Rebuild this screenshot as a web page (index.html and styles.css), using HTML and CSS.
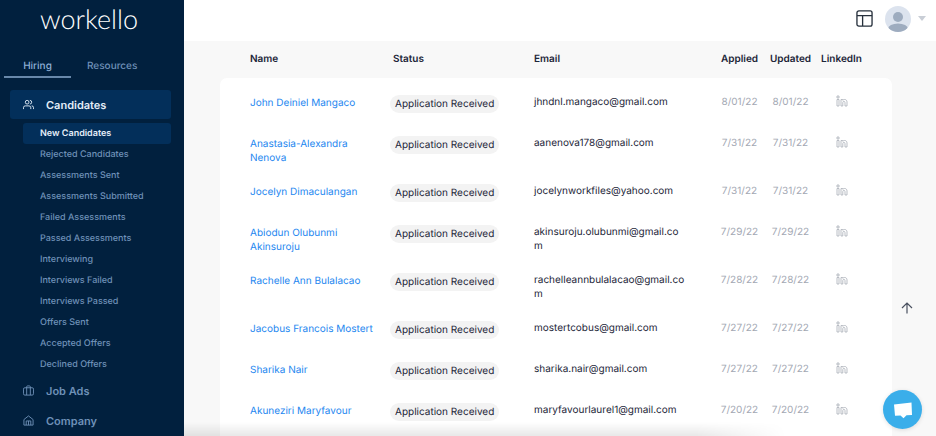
FILE: index.html
```html
<!DOCTYPE html>
<html lang="en">
<head>
    <meta charset="UTF-8">
    <meta name="viewport" content="width=device-width, initial-scale=1.0">
    <title>New Candidates - Workello</title>
    <link rel="stylesheet" href="styles.css">
</head>
<body>
    <svg class="sprite" aria-hidden="true">
        <symbol id="icon-linkedin" viewBox="0 0 12 12">
            <path d="M1 4.5h2v6.5H1zM1 1h2v2H1zM5 11V4.5h1.8v.8C8 3.900 11 4.200 11 7v4H9V7.500c0-1.500-2.200-1.500-2.200 0V11z"/>
        </symbol>
    </svg>

    <div class="layout">
        <aside class="sidebar">
            <a class="logo" href="#">workello</a>

            <div class="tabs">
                <a class="tab active" href="#">Hiring</a>
                <a class="tab" href="#">Resources</a>
            </div>

            <nav class="nav">
                <a class="nav-item active" href="#">
                    <svg class="nav-icon" viewBox="0 0 24 24">
                        <circle cx="9" cy="7" r="4"/>
                        <path d="M1 22v-3a4 4 0 0 1 4-4h8a4 4 0 0 1 4 4v3M15 3a4 4 0 0 1 0 8M19 15a4 4 0 0 1 4 4v3"/>
                    </svg>
                    Candidates
                </a>
                <ul class="sub-nav">
                    <li><a class="active" href="#">New Candidates</a></li>
                    <li><a href="#">Rejected Candidates</a></li>
                    <li><a href="#">Assessments Sent</a></li>
                    <li><a href="#">Assessments Submitted</a></li>
                    <li><a href="#">Failed Assessments</a></li>
                    <li><a href="#">Passed Assessments</a></li>
                    <li><a href="#">Interviewing</a></li>
                    <li><a href="#">Interviews Failed</a></li>
                    <li><a href="#">Interviews Passed</a></li>
                    <li><a href="#">Offers Sent</a></li>
                    <li><a href="#">Accepted Offers</a></li>
                    <li><a href="#">Declined Offers</a></li>
                </ul>
                <a class="nav-item" href="#">
                    <svg class="nav-icon" viewBox="0 0 24 24">
                        <rect x="1" y="6" width="22" height="16" rx="3"/>
                        <path d="M8 22V4a2 2 0 0 1 2-2h4a2 2 0 0 1 2 2v18"/>
                    </svg>
                    Job Ads
                </a>
                <a class="nav-item" href="#">
                    <svg class="nav-icon" viewBox="0 0 24 24">
                        <path d="M2 10L12 2l10 8v12H2zM7 22v-9h10v9M12 13v9"/>
                    </svg>
                    Company
                </a>
            </nav>
        </aside>

        <main class="main">
            <header class="topbar">
                <button class="icon-btn" type="button" aria-label="Layout">
                    <svg class="layout-icon" viewBox="0 0 18 18">
                        <rect x="1" y="1" width="16" height="16" rx="2"/>
                        <path d="M1 6h16M7 6v11"/>
                    </svg>
                </button>
                <button class="icon-btn user-btn" type="button" aria-label="Account">
                    <svg class="avatar" viewBox="0 0 26 26">
                        <clipPath id="avatar-clip"><circle cx="13" cy="13" r="13"/></clipPath>
                        <g clip-path="url(#avatar-clip)">
                            <rect width="26" height="26" fill="#dce3ee"/>
                            <circle cx="13" cy="11" r="5" fill="#9eacbf"/>
                            <ellipse cx="13" cy="23" rx="10" ry="5.500" fill="#9eacbf"/>
                        </g>
                    </svg>
                    <svg class="caret" viewBox="0 0 8 5"><path d="M0 0h8L4 5z"/></svg>
                </button>
            </header>

            <div class="content">
                <table class="candidates">
                    <colgroup>
                        <col class="col-name">
                        <col class="col-status">
                        <col>
                        <col class="col-date">
                        <col class="col-date">
                        <col class="col-linkedin">
                    </colgroup>
                    <thead>
                        <tr>
                            <th class="name">Name</th>
                            <th class="status">Status</th>
                            <th>Email</th>
                            <th class="date">Applied</th>
                            <th class="date">Updated</th>
                            <th class="linkedin">LinkedIn</th>
                        </tr>
                    </thead>
                    <tbody>
                        <tr>
                            <td class="name"><a href="#">John Deiniel Mangaco</a></td>
                            <td><span class="badge">Application Received</span></td>
                            <td class="email">jhndnl.mangaco@gmail.com</td>
                            <td class="date">8/01/22</td>
                            <td class="date">8/01/22</td>
                            <td class="linkedin"><a href="#" aria-label="LinkedIn"><svg><use href="#icon-linkedin"/></svg></a></td>
                        </tr>
                        <tr>
                            <td class="name"><a href="#">Anastasia-Alexandra Nenova</a></td>
                            <td><span class="badge">Application Received</span></td>
                            <td class="email">aanenova178@gmail.com</td>
                            <td class="date">7/31/22</td>
                            <td class="date">7/31/22</td>
                            <td class="linkedin"><a href="#" aria-label="LinkedIn"><svg><use href="#icon-linkedin"/></svg></a></td>
                        </tr>
                        <tr>
                            <td class="name"><a href="#">Jocelyn Dimaculangan</a></td>
                            <td><span class="badge">Application Received</span></td>
                            <td class="email">jocelynworkfiles@yahoo.com</td>
                            <td class="date">7/31/22</td>
                            <td class="date">7/31/22</td>
                            <td class="linkedin"><a href="#" aria-label="LinkedIn"><svg><use href="#icon-linkedin"/></svg></a></td>
                        </tr>
                        <tr>
                            <td class="name"><a href="#">Abiodun Olubunmi Akinsuroju</a></td>
                            <td><span class="badge">Application Received</span></td>
                            <td class="email">akinsuroju.olubunmi@gmail.com</td>
                            <td class="date">7/29/22</td>
                            <td class="date">7/29/22</td>
                            <td class="linkedin"><a href="#" aria-label="LinkedIn"><svg><use href="#icon-linkedin"/></svg></a></td>
                        </tr>
                        <tr>
                            <td class="name"><a href="#">Rachelle Ann Bulalacao</a></td>
                            <td><span class="badge">Application Received</span></td>
                            <td class="email">rachelleannbulalacao@gmail.com</td>
                            <td class="date">7/28/22</td>
                            <td class="date">7/28/22</td>
                            <td class="linkedin"><a href="#" aria-label="LinkedIn"><svg><use href="#icon-linkedin"/></svg></a></td>
                        </tr>
                        <tr>
                            <td class="name"><a href="#">Jacobus Francois Mostert</a></td>
                            <td><span class="badge">Application Received</span></td>
                            <td class="email">mostertcobus@gmail.com</td>
                            <td class="date">7/27/22</td>
                            <td class="date">7/27/22</td>
                            <td class="linkedin"><a href="#" aria-label="LinkedIn"><svg><use href="#icon-linkedin"/></svg></a></td>
                        </tr>
                        <tr>
                            <td class="name"><a href="#">Sharika Nair</a></td>
                            <td><span class="badge">Application Received</span></td>
                            <td class="email">sharika.nair@gmail.com</td>
                            <td class="date">7/27/22</td>
                            <td class="date">7/27/22</td>
                            <td class="linkedin"><a href="#" aria-label="LinkedIn"><svg><use href="#icon-linkedin"/></svg></a></td>
                        </tr>
                        <tr>
                            <td class="name"><a href="#">Akuneziri Maryfavour</a></td>
                            <td><span class="badge">Application Received</span></td>
                            <td class="email">maryfavourlaurel1@gmail.com</td>
                            <td class="date">7/20/22</td>
                            <td class="date">7/20/22</td>
                            <td class="linkedin"><a href="#" aria-label="LinkedIn"><svg><use href="#icon-linkedin"/></svg></a></td>
                        </tr>
                    </tbody>
                </table>
            </div>
        </main>
    </div>

    <div class="bottom-fade"></div>

    <button class="scroll-top" type="button" aria-label="Back to top">
        <svg viewBox="0 0 12 12"><path d="M6 11.500V1M1 6l5-5 5 5"/></svg>
    </button>
    <button class="chat-btn" type="button" aria-label="Open chat">
        <svg viewBox="0 0 20 18"><path d="M1 3.500L18.500 1.500 19 14l-5.500.3-3 3-3-2.700-5.500.2z"/></svg>
    </button>
</body>
</html>
```
FILE: styles.css
```css
* {
    margin: 0;
    padding: 0;
    box-sizing: border-box;
}

body {
    font-family: Inter, 'Open Sans', sans-serif;
    font-size: 10px;
    line-height: 14px;
    text-rendering: geometricPrecision;
    color: #1d2639;
    background: #f8f8f8;
    height: 100vh;
    overflow: hidden;
}

a {
    color: inherit;
    text-decoration: none;
}

button {
    border: none;
    background: none;
    cursor: pointer;
}

svg {
    display: block;
}

.sprite {
    display: none;
}

.layout {
    display: flex;
    height: 100vh;
}

/* Sidebar */
.sidebar {
    width: 184px;
    flex-shrink: 0;
    background: #01203e;
    color: #6f91b8;
    overflow: hidden;
}

.logo {
    display: block;
    padding: 4px 6px 0 0;
    font-family: Lato, sans-serif;
    font-size: 27px;
    font-weight: 300;
    line-height: 30px;
    color: white;
    text-align: center;
}

.tabs {
    display: flex;
    padding: 18px 4px 0;
    margin-bottom: 12px;
}

.tab {
    min-width: 67px;
    height: 26px;
    padding: 7px 16px 0;
    font-size: 10px;
    font-weight: 500;
    text-align: center;
}

.tab.active {
    color: #8fb0d6;
    border-bottom: 2px solid #6888aa;
}

.nav {
    padding: 0 13px 0 10px;
}

.nav-item {
    display: flex;
    align-items: center;
    gap: 12px;
    height: 29px;
    margin-bottom: 1px;
    padding-left: 13px;
    border-radius: 3px;
    font-size: 11px;
    font-weight: 600;
}

.nav-item.active {
    background: #032f5a;
    color: #e3edf8;
}

.nav-icon {
    width: 11px;
    height: 11px;
    fill: none;
    stroke: currentColor;
    stroke-width: 2;
    stroke-linejoin: round;
}

.sub-nav {
    list-style: none;
    padding: 3px 0 1px 13px;
}

.sub-nav a {
    display: block;
    padding-left: 17px;
    border-radius: 3px;
    font-size: 9px;
    font-weight: 500;
    line-height: 21px;
}

.sub-nav a.active {
    background: #032f5a;
    color: #e3edf8;
    font-weight: 600;
}

/* Top bar */
.main {
    flex: 1;
    min-width: 0;
}

.topbar {
    display: flex;
    justify-content: flex-end;
    align-items: center;
    gap: 12px;
    height: 41px;
    padding: 0 10px 4px 0;
    background: white;
}

.user-btn {
    display: flex;
    align-items: center;
    gap: 7px;
}

.layout-icon {
    width: 17px;
    height: 17px;
    fill: none;
    stroke: #26303c;
    stroke-width: 1.4;
}

.avatar {
    width: 26px;
    height: 26px;
}

.caret {
    width: 8px;
    height: 5px;
    fill: #c9ced6;
}

/* Candidates table */
.content {
    padding: 0 44px 0 36px;
}

.candidates {
    width: 100%;
    table-layout: fixed;
    border-collapse: separate;
    border-spacing: 0;
}

.col-name {
    width: 170px;
}

.col-status {
    width: 144px;
}

.col-date {
    width: 51px;
}

.col-linkedin {
    width: 76px;
}

.candidates th {
    height: 37px;
    padding-bottom: 2px;
    font-weight: 600;
    text-align: left;
    vertical-align: middle;
}

.candidates td {
    padding: 10px 0;
    background: white;
    vertical-align: top;
}

.candidates td.name {
    padding-top: 11px;
    padding-bottom: 9px;
    color: #1e87f0;
}

.candidates tbody tr:first-child td {
    border-top: 7px solid white;
}

.candidates tbody tr:first-child td:first-child {
    border-top-left-radius: 7px;
}

.candidates tbody tr:first-child td:last-child {
    border-top-right-radius: 7px;
}

.candidates tbody tr:last-child td {
    border-bottom: 7px solid white;
}

.candidates .name {
    padding-left: 30px;
    padding-right: 16px;
}

.candidates th.status {
    padding-left: 3px;
}

.candidates td.email {
    padding-right: 29px;
    overflow-wrap: anywhere;
}

.candidates .date {
    text-align: center;
}

.candidates td.date {
    color: #a3a8b3;
}

.candidates .linkedin {
    padding-right: 25px;
    text-align: center;
}

.linkedin svg {
    width: 12px;
    height: 12px;
    margin: 0 auto;
    fill: none;
    stroke: #a9aeb8;
    stroke-width: 0.8;
}

.badge {
    display: block;
    width: max-content;
    margin-bottom: 3px;
    padding: 0 5px;
    border-radius: 9px;
    background: #f3f3f3;
    line-height: 18px;
}

/* Floating elements */
.bottom-fade {
    position: fixed;
    left: 184px;
    right: 150px;
    bottom: 0;
    height: 14px;
    background: linear-gradient(to bottom, rgba(0,0,0,0), rgba(0,0,0,0.09));
    -webkit-mask-image: linear-gradient(to right, black 85%, transparent);
    mask-image: linear-gradient(to right, black 85%, transparent);
    pointer-events: none;
}

.scroll-top {
    position: fixed;
    right: 23px;
    bottom: 122px;
}

.scroll-top svg {
    width: 12px;
    height: 12px;
    fill: none;
    stroke: #4a5160;
    stroke-width: 1.2;
}

.chat-btn {
    position: fixed;
    right: 14px;
    bottom: 7px;
    display: flex;
    align-items: center;
    justify-content: center;
    width: 39px;
    height: 39px;
    border-radius: 50%;
    background: #3aaeea;
    box-shadow: 0 1px 4px rgba(0,0,0,0.12);
}

.chat-btn svg {
    width: 20px;
    height: 18px;
    fill: white;
}
```
